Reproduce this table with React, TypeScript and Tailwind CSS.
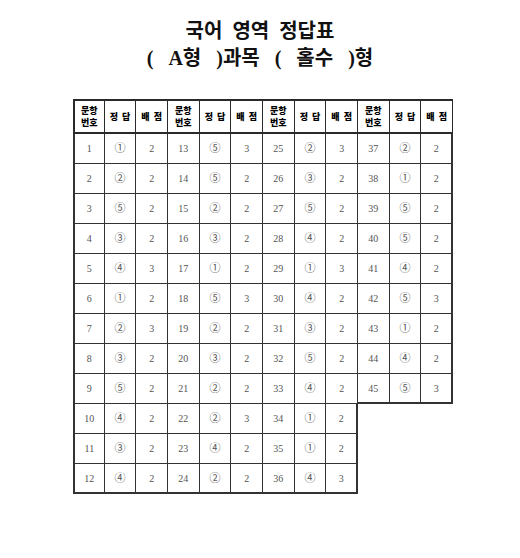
const rows: [string, string, string][][] = [
  [["1", "①", "2"], ["13", "⑤", "3"], ["25", "②", "3"], ["37", "②", "2"]],
  [["2", "②", "2"], ["14", "⑤", "2"], ["26", "③", "2"], ["38", "①", "2"]],
  [["3", "⑤", "2"], ["15", "②", "2"], ["27", "⑤", "2"], ["39", "⑤", "2"]],
  [["4", "③", "2"], ["16", "③", "2"], ["28", "④", "2"], ["40", "⑤", "2"]],
  [["5", "④", "3"], ["17", "①", "2"], ["29", "①", "3"], ["41", "④", "2"]],
  [["6", "①", "2"], ["18", "⑤", "3"], ["30", "④", "2"], ["42", "⑤", "3"]],
  [["7", "②", "3"], ["19", "②", "2"], ["31", "③", "2"], ["43", "①", "2"]],
  [["8", "③", "2"], ["20", "③", "2"], ["32", "⑤", "2"], ["44", "④", "2"]],
  [["9", "⑤", "2"], ["21", "②", "2"], ["33", "④", "2"], ["45", "⑤", "3"]],
  [["10", "④", "2"], ["22", "②", "3"], ["34", "①", "2"]],
  [["11", "③", "2"], ["23", "④", "2"], ["35", "①", "2"]],
  [["12", "④", "2"], ["24", "②", "2"], ["36", "④", "3"]],
];

const serif = "font-['Liberation_Serif','Noto_Sans_CJK_KR',serif]";

function HeaderCell({ children, first }: { children: React.ReactNode; first?: boolean }) {
  return (
    <div
      className={`flex h-[35px] items-center justify-center border-t-2 border-r border-b-2 border-[#2a2a2a] text-center font-['Noto_Sans_CJK_KR',sans-serif] text-[9px] leading-[12px] font-black text-black ${
        first ? "border-l-2" : ""
      }`}
    >
      {children}
    </div>
  );
}

export default function App() {
  return (
    <div className="h-[558px] w-[520px] bg-white pt-[18px]">
      <div className={`text-center text-[20px] leading-[27px] font-bold text-[#111] ${serif}`}>
        <div>국어&nbsp; 영역&nbsp; 정답표</div>
        <div>
          (&nbsp;&nbsp;&nbsp;A형&nbsp;&nbsp;&nbsp;)과목&nbsp;&nbsp;&nbsp;(&nbsp;&nbsp;&nbsp;홀수&nbsp;&nbsp;&nbsp;)형
        </div>
      </div>

      <div className="mt-[27px] ml-[73px] grid w-[380px] grid-cols-12">
        {[0, 1, 2, 3].map((g) => (
          <div key={g} className="contents">
            <HeaderCell first={g === 0}>
              문항
              <br />
              번호
            </HeaderCell>
            <HeaderCell>정&nbsp; 답</HeaderCell>
            <HeaderCell>배&nbsp; 점</HeaderCell>
          </div>
        ))}

        {rows.map((row, r) =>
          row.map((cell, g) =>
            cell.map((v, c) => {
              const first = g === 0 && c === 0;
              const lastCol = (g === 3 && c === 2) || (g === 2 && c === 2 && row.length === 3);
              return (
                <div
                  key={`${r}-${g}-${c}`}
                  className={`flex h-[30px] items-center justify-center border-[#333] text-[#555] ${serif} ${
                    c === 1 ? "text-[11px]" : "text-[10px]"
                  } ${first ? "border-l-2" : ""} ${lastCol ? "border-r-2" : "border-r"} ${
                    r === rows.length - 1 || (g === 3 && r === 8) ? "border-b-2" : "border-b"
                  }`}
                  style={{ gridRow: r + 2, gridColumn: g * 3 + c + 1 }}
                >
                  {v}
                </div>
              );
            })
          )
        )}
      </div>
    </div>
  );
}
